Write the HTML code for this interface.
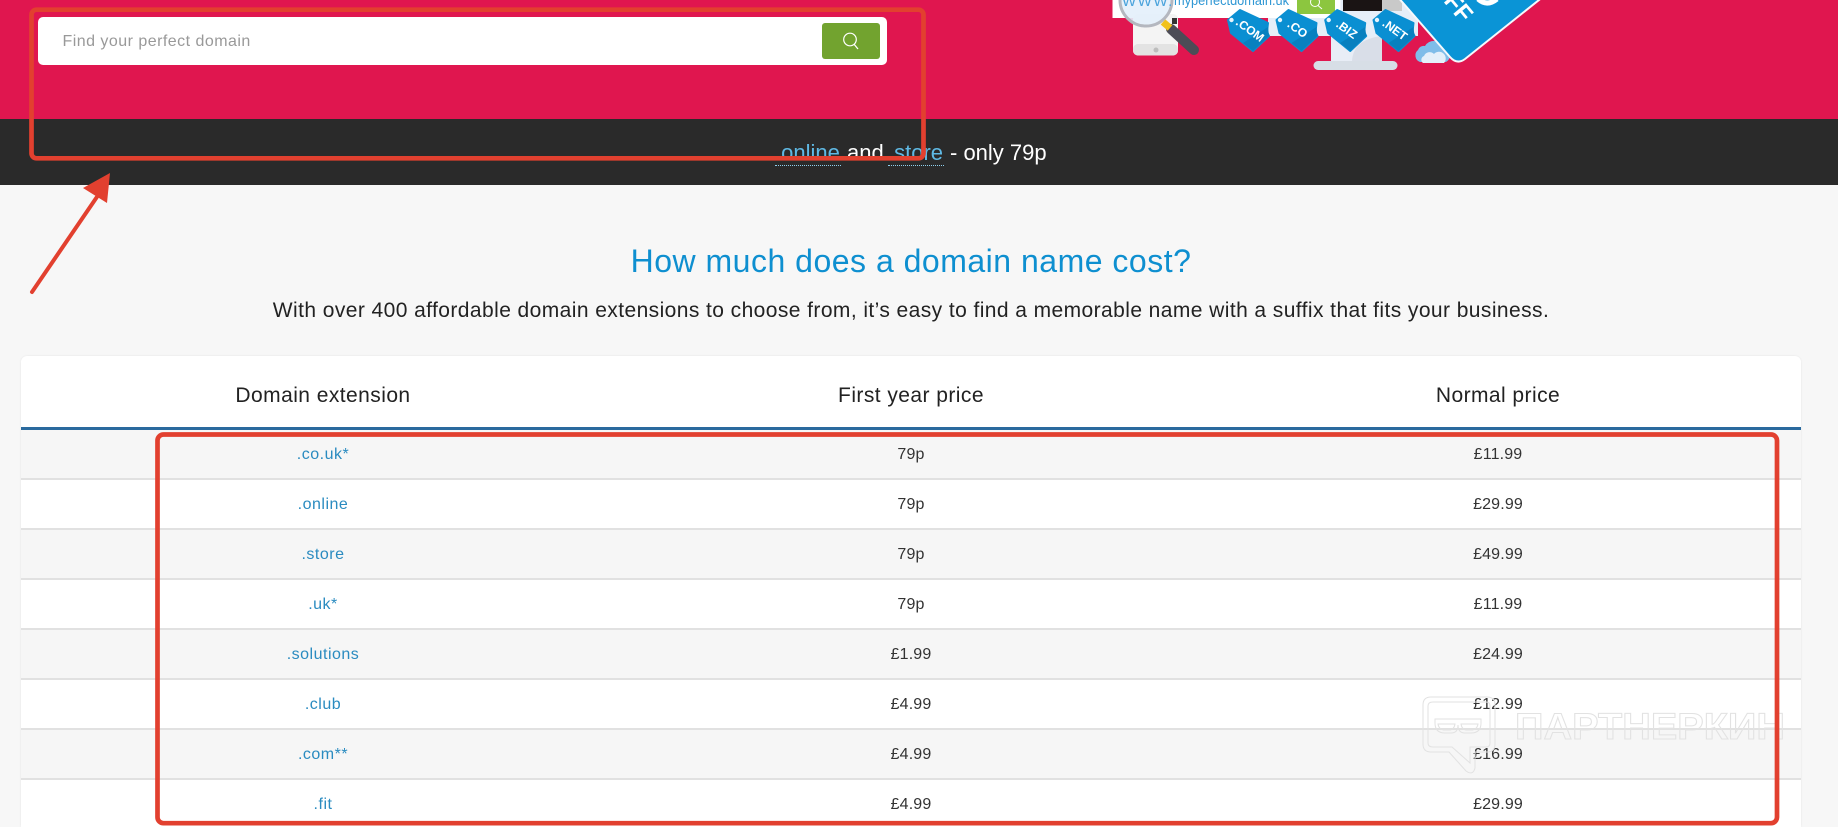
<!DOCTYPE html>
<html lang="en"><head><meta charset="utf-8"><title>How much does a domain name cost?</title>
<style>
*{box-sizing:border-box}
html{margin:0;padding:0;width:1838px;height:827px;overflow:hidden}
body{margin:0;padding:0;width:1838px;height:827px;overflow:hidden;position:relative;background:#f7f7f7;font-family:"Liberation Sans",sans-serif;color:#222}
.hero{position:absolute;left:0;top:0;width:1838px;height:119px;background:#e0164f}
.search{position:absolute;left:38px;top:17px;width:849px;height:48px;background:#fff;border-radius:5px}
.ph{position:absolute;left:24.5px;top:1px;line-height:48px;font-size:16px;color:#999;letter-spacing:.47px;white-space:nowrap}
.btn{position:absolute;left:784px;top:6px;width:58px;height:36px;background:#72a32f;border-radius:3px}
.strip{position:absolute;left:0;top:119px;width:1838px;height:66px;background:#2a2a2a;color:#fff;font-size:22px}
.strip span{position:absolute;top:22px;line-height:24px;white-space:nowrap}
.strip a{position:absolute;top:22px;line-height:24px;color:#5fb9e4;text-decoration:none;white-space:nowrap;border-bottom:1px dotted #8fd0ee;height:25px}
h1{position:absolute;left:0;width:1822px;top:243px;margin:0;text-align:center;font-weight:400;font-size:32px;line-height:36px;color:#0e8fd0;letter-spacing:.5px;white-space:nowrap}
.sub{position:absolute;left:0;width:1822px;top:298px;margin:0;text-align:center;font-size:21px;line-height:26px;color:#222;letter-spacing:.42px;white-space:nowrap}
.card{position:absolute;left:21px;top:356px;width:1780px;height:471px;overflow:hidden;background:#fff;border-radius:6px 6px 0 0;box-shadow:0 0 2px rgba(0,0,0,.08)}
table{border-collapse:separate;border-spacing:0;table-layout:fixed;width:1780px}
th{height:74px;padding:9px 0 0;font-weight:400;font-size:21px;color:#222;border-bottom:3px solid #2a6a9e;letter-spacing:.44px;vertical-align:middle}
td{height:50px;padding:2px 0 0;text-align:center;font-size:16px;color:#333;border-bottom:2px solid #e1e1e1;letter-spacing:.15px}
th:last-child,td:last-child{padding-right:2px}
tbody tr:nth-child(odd) td{background:#f6f6f6}
td a{color:#2a8bc0;text-decoration:none;letter-spacing:.5px}
svg.ov{position:absolute;left:0;top:0;pointer-events:none}
</style></head><body>
<div class="hero"></div>

<svg class="ov" width="1838" height="119" viewBox="0 0 1838 119" style="top:0">
<!-- monitor -->
<rect x="1268" y="0" width="150" height="36" fill="#e6eef8"/>
<rect x="1343" y="0" width="39" height="11" fill="#1a1414"/>
<rect x="1382" y="0" width="20" height="11" fill="#c9c9c9"/>
<rect x="1331" y="36" width="51" height="26" fill="#e8edf6"/>
<path d="M1352 62C1352 48 1362 38 1382 36V62Z" fill="#d9dee8"/>
<rect x="1313.5" y="61" width="84" height="9" rx="4.5" fill="#d7dee6"/>
<!-- url bar -->
<rect x="1112.5" y="-5" width="228" height="23" fill="#fff"/>
<rect x="1297" y="-3" width="38" height="17" fill="#8cc63f"/>
<circle cx="1315" cy="2" r="4.5" fill="none" stroke="#fff" stroke-width="1"/>
<path d="M1318 5.5L1322 9" stroke="#fff" stroke-width="1"/>
<text x="1174" y="5" font-size="13.5" fill="#2f97d4" textLength="115" lengthAdjust="spacingAndGlyphs">myperfectdomain.uk</text>
<!-- phone -->
<rect x="1133" y="14" width="45" height="41.5" rx="5" fill="#f4f4f4"/>
<rect x="1133" y="44" width="45" height="11.5" rx="5" fill="#e3e3e3"/>
<circle cx="1156" cy="50" r="2.5" fill="#bdbdbd"/>
<rect x="1172" y="18" width="5" height="6" fill="#333"/>
<!-- magnifier -->
<path d="M1171 29L1194 50" stroke="#4c4c56" stroke-width="10" stroke-linecap="round"/>
<path d="M1163 22L1170 28" stroke="#f2c21a" stroke-width="7"/>
<circle cx="1146" cy="0" r="26" fill="#e3f0fb" fill-opacity=".9" stroke="#b4b7bf" stroke-width="3"/>
<text x="1122" y="6" font-size="15" fill="#4aa3dc" letter-spacing="1.5">WWW.</text>
<!-- tags -->
<g transform="translate(1225 0)">
<path d="M3 20L15 10L43 23L42 32L44 36L28 51L6 33Z" fill="#0a8fd2" stroke="#0a8fd2" stroke-width="2" stroke-linejoin="round"/>
<path d="M44 36L28 51L18 43L43 27Z" fill="#0880bf"/>
<circle cx="6.5" cy="20" r="2.2" fill="#e8f4fc"/>
<text transform="translate(10 24) rotate(36)" font-size="12" font-weight="700" fill="#fff">.COM</text>
</g>
<g transform="translate(1273.5 0)">
<path d="M3 20L15 10L43 23L42 32L44 36L28 51L6 33Z" fill="#0a8fd2" stroke="#0a8fd2" stroke-width="2" stroke-linejoin="round"/>
<path d="M44 36L28 51L18 43L43 27Z" fill="#0880bf"/>
<circle cx="6.5" cy="20" r="2.2" fill="#e8f4fc"/>
<text transform="translate(13 26) rotate(36)" font-size="12" font-weight="700" fill="#fff">.CO</text>
</g>
<g transform="translate(1322.2 0)">
<path d="M3 20L15 10L43 23L42 32L44 36L28 51L6 33Z" fill="#0a8fd2" stroke="#0a8fd2" stroke-width="2" stroke-linejoin="round"/>
<path d="M44 36L28 51L18 43L43 27Z" fill="#0880bf"/>
<circle cx="6.5" cy="20" r="2.2" fill="#e8f4fc"/>
<text transform="translate(13 26) rotate(36)" font-size="12" font-weight="700" fill="#fff">.BIZ</text>
</g>
<g transform="translate(1370.5 0)">
<path d="M3 20L15 10L43 23L42 32L44 36L28 51L6 33Z" fill="#0a8fd2" stroke="#0a8fd2" stroke-width="2" stroke-linejoin="round"/>
<path d="M44 36L28 51L18 43L43 27Z" fill="#0880bf"/>
<circle cx="6.5" cy="20" r="2.2" fill="#e8f4fc"/>
<text transform="translate(11 25) rotate(36)" font-size="12" font-weight="700" fill="#fff">.NET</text>
</g>
<!-- cloud -->
<path d="M1420 62a7 7 0 0 1-2-12a6 6 0 0 1 7-4a10 10 0 0 1 18 1a8 8 0 0 1 3 15Z" fill="#7fbde9"/>
<path d="M1423 63a4 4 0 0 1 1-7a6 6 0 0 1 10-2a5 5 0 0 1 10 9Z" fill="#e4f0fa"/>
<!-- big tag -->
<path d="M1397 -4L1450 57Q1457 65 1465 59L1544 -4Z" fill="#0a94d6" stroke="#f5f9fc" stroke-width="2" stroke-linejoin="round"/>
<text transform="translate(1431 -13) rotate(50)" font-size="24" font-weight="700" fill="#fff">OFF</text>
<path d="M1478 -1Q1487 7 1497 -1" fill="none" stroke="#fff" stroke-width="5"/>
</svg>

<div class="search">
<div class="ph">Find your perfect domain</div>
<div class="btn"><svg width="58" height="36" viewBox="0 0 58 36"><circle cx="28" cy="16.5" r="6.3" fill="none" stroke="#fff" stroke-width="1.2"/><path d="M32.3 21.5L36 26" stroke="#fff" stroke-width="1.3"/></svg></div>
</div>

<div class="strip">
<a style="left:775px;width:66px">.online</a>
<span style="left:847px">and</span>
<a style="left:888px;width:56px">.store</a>
<span style="left:950px">- only 79p</span>
</div>

<h1>How much does a domain name cost?</h1>
<p class="sub">With over 400 affordable domain extensions to choose from, it’s easy to find a memorable name with a suffix that fits your business.</p>

<div class="card">
<table>
<colgroup><col style="width:604px"><col style="width:572px"><col style="width:604px"></colgroup>
<thead><tr><th>Domain extension</th><th>First year price</th><th>Normal price</th></tr></thead>
<tbody>
<tr><td><a>.co.uk*</a></td><td>79p</td><td>£11.99</td></tr>
<tr><td><a>.online</a></td><td>79p</td><td>£29.99</td></tr>
<tr><td><a>.store</a></td><td>79p</td><td>£49.99</td></tr>
<tr><td><a>.uk*</a></td><td>79p</td><td>£11.99</td></tr>
<tr><td><a>.solutions</a></td><td>£1.99</td><td>£24.99</td></tr>
<tr><td><a>.club</a></td><td>£4.99</td><td>£12.99</td></tr>
<tr><td><a>.com**</a></td><td>£4.99</td><td>£16.99</td></tr>
<tr><td><a>.fit</a></td><td>£4.99</td><td>£29.99</td></tr>
</tbody>
</table>
</div>

<svg class="ov" width="1838" height="827" viewBox="0 0 1838 827">
<!-- watermark -->
<g fill="none" stroke="#e2e2e2" stroke-width="1">
<path d="M1431 697H1487Q1495 697 1495 705V744Q1495 752 1487 752H1475L1475 768Q1473 776 1466 771L1449 752H1431Q1423 752 1423 744V705Q1423 697 1431 697Z"/>
<path d="M1433 702H1486Q1490 702 1490 706V743Q1490 747 1486 747H1470L1470 763L1452 747H1433Q1428 747 1428 743V706Q1428 702 1433 702Z"/>
<path d="M1435 719H1481V723Q1481 733 1471 733H1465Q1458 733 1458 725Q1458 733 1451 733H1445Q1435 733 1435 723Z"/>
<path d="M1438 724H1455Q1454 730 1449 730H1445Q1439 730 1438 724ZM1461 724H1478Q1477 730 1471 730H1467Q1462 730 1461 724Z"/>
<text x="1515" y="739" font-size="37" font-weight="700" font-family="Liberation Sans, sans-serif" textLength="270" lengthAdjust="spacingAndGlyphs">ПАРТНЕРКИН</text>
</g>
<!-- annotations -->
<g fill="none" stroke="#e2402f" stroke-width="4.7">
<rect x="31.5" y="9.7" width="892" height="148.6" rx="5"/>
<rect x="157.5" y="434.5" width="1619.5" height="388.7" rx="6"/>
</g>
<path d="M32 292L101 191" stroke="#e2402f" stroke-width="4" stroke-linecap="round" fill="none"/>
<path d="M110 173L83 188L107 203Z" fill="#e2402f"/>
</svg>
</body></html>
